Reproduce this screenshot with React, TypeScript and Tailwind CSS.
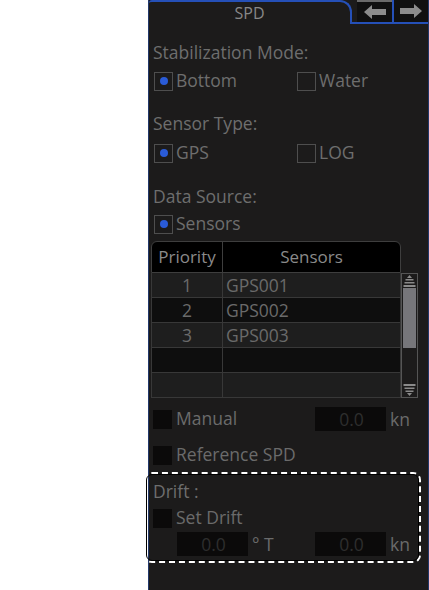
import React from 'react';

const font = { fontFamily: '"Open Sans", "Noto Sans", sans-serif' };

const Radio = ({ on, label }: { on?: boolean; label: string }) => (
  <div className="flex items-center h-[18px]">
    <div className="w-[19px] h-[19px] shrink-0 border border-[#4e4e4e] flex items-center justify-center">
      {on && <div className="w-[8px] h-[8px] rounded-full bg-[#2a5bd7]" />}
    </div>
    <span className="ml-[3px] text-[17.5px] leading-none text-[#6e6e6e]">{label}</span>
  </div>
);

const Check = ({ label }: { label: string }) => (
  <div className="flex items-center h-[18px]">
    <div className="w-[19px] h-[19px] shrink-0 bg-[#0b0a0a]" />
    <span className="ml-[4px] text-[17.5px] leading-none text-[#6b6b6b]">{label}</span>
  </div>
);

const NumBox = ({ unit }: { unit: string }) => (
  <div className="flex items-center">
    <div className="w-[71px] h-[24px] bg-[#0b0a0a] flex items-center justify-center text-[17.5px] text-[#2e2e2e] pl-[2px]">0.0</div>
    <span className="ml-[4px] text-[17.5px] text-[#6b6b6b]">{unit}</span>
  </div>
);

const rows = [
  { p: '1', s: 'GPS001', bg: 'bg-[#1e1e1e]' },
  { p: '2', s: 'GPS002', bg: 'bg-[#0e0e0e]' },
  { p: '3', s: 'GPS003', bg: 'bg-[#1e1e1e]' },
  { p: '', s: '', bg: 'bg-[#0e0e0e]' },
  { p: '', s: '', bg: 'bg-[#1e1e1e]' },
];

const Arrow = ({ dir }: { dir: 'left' | 'right' }) => (
  <svg width="24" height="16" viewBox="0 0 24 16">
    <polygon
      points={dir === 'left' ? '1,8 9,1 9,5 23,5 23,11 9,11 9,15' : '23,8 15,1 15,5 1,5 1,11 15,11 15,15'}
      fill="#8c8c8c"
    />
  </svg>
);

const ScrollArrow = ({ up }: { up?: boolean }) => (
  <svg width="13" height="14" viewBox="0 0 13 14" className={up ? '' : 'rotate-180'}>
    <polygon points="6.5,1 9,4 4,4" fill="#8a8a8a" />
    <rect x="2.5" y="5" width="8" height="1.5" fill="#8a8a8a" />
    <rect x="1.5" y="8" width="10" height="1.5" fill="#8a8a8a" />
    <rect x="0.5" y="11" width="12" height="2" fill="#8a8a8a" />
  </svg>
);

const Label = ({ children, className }: { children: React.ReactNode; className: string }) => (
  <div className={`h-[24px] flex items-center text-[17.5px] text-[#6e6e6e] ${className}`}>{children}</div>
);

export default function App() {
  return (
    <div className="w-[429px] h-[590px] bg-white flex overflow-hidden" style={font}>
      <div className="w-[148px] shrink-0" />
      <div className="flex-1 flex flex-col bg-[#1c1b1b] border-l border-r border-[#22386a]">
        {/* tab header */}
        <div className="h-[24px] flex shrink-0">
          <div className="w-[203px] h-[24px] border-t-2 border-r-2 border-[#2550b8] rounded-tr-[12px] rounded-tl-[3px] flex items-center justify-center text-[16px] text-[#888]">
            SPD
          </div>
          <div className="flex-1 flex border-b-2 border-[#2550b8]">
            <div className="w-[5px]" />
            <div className="w-[35px] bg-[#101010] border-t-2 border-[#6a6a6a] flex items-center justify-center">
              <Arrow dir="left" />
            </div>
            <div className="flex-1 bg-[#101010] border-l-2 border-[#2550b8] flex items-center justify-center">
              <Arrow dir="right" />
            </div>
          </div>
        </div>

        <div className="pl-[4px] flex flex-col">
          <Label className="mt-[16px]">Stabilization Mode:</Label>
          <div className="h-[18px] mt-[8px] flex items-center pl-[1px]">
            <div className="w-[143px]"><Radio on label="Bottom" /></div>
            <Radio label="Water" />
          </div>
          <Label className="mt-[21px]">Sensor Type:</Label>
          <div className="h-[18px] mt-[9px] flex items-center pl-[1px]">
            <div className="w-[143px]"><Radio on label="GPS" /></div>
            <Radio label="LOG" />
          </div>
          <Label className="mt-[22px]">Data Source:</Label>
          <div className="h-[18px] mt-[7px] flex items-center pl-[1px]">
            <Radio on label="Sensors" />
          </div>
        </div>

        {/* table */}
        <div className="mt-[8px] ml-[2px] flex">
          <div className="w-[250px] flex flex-col">
            <div className="h-[32px] flex bg-black border border-[#3e3e3e] rounded-t-[6px] text-[17px] text-[#8a8a8a]">
              <div className="w-[71px] border-r border-[#3e3e3e] flex items-center justify-center">Priority</div>
              <div className="flex-1 flex items-center justify-center">Sensors</div>
            </div>
            {rows.map((r, i) => (
              <div key={i} className={`h-[25px] flex border-x border-b border-[#383838] ${r.bg} text-[17.5px] text-[#6a6a6a]`}>
                <div className="w-[71px] border-r border-[#383838] flex items-center justify-center">{r.p}</div>
                <div className="flex-1 flex items-center pl-[3px]">{r.s}</div>
              </div>
            ))}
          </div>
          <div className="mt-[32px] w-[17px] h-[125px] border border-[#555] flex flex-col items-center">
            <div className="h-[14px] flex items-center"><ScrollArrow up /></div>
            <div className="w-[13px] h-[60px] bg-[#76767a]" />
            <div className="flex-1" />
            <div className="h-[14px] flex items-center"><ScrollArrow /></div>
          </div>
        </div>

        <div className="pl-[4px] flex flex-col">
          <div className="h-[24px] mt-[9px] flex items-center">
            <div className="w-[162px]"><Check label="Manual" /></div>
            <NumBox unit="kn" />
          </div>
          <div className="h-[24px] mt-[12px] flex items-center">
            <Check label="Reference SPD" />
          </div>
        </div>

        {/* drift group */}
        <div className="mt-[5px] ml-[-5px] w-[277px] h-[91px] border-2 border-dashed border-white rounded-[8px] outline outline-1 outline-black -outline-offset-[3px] pl-[7px] flex flex-col">
          <Label className="mt-[5px]">Drift :</Label>
          <div className="h-[18px] mt-[6px] flex items-center">
            <Check label="Set Drift" />
          </div>
          <div className="h-[24px] mt-[5px] flex items-center">
            <div className="w-[24px]" />
            <div className="w-[138px]"><NumBox unit="° T" /></div>
            <NumBox unit="kn" />
          </div>
        </div>
      </div>
    </div>
  );
}
